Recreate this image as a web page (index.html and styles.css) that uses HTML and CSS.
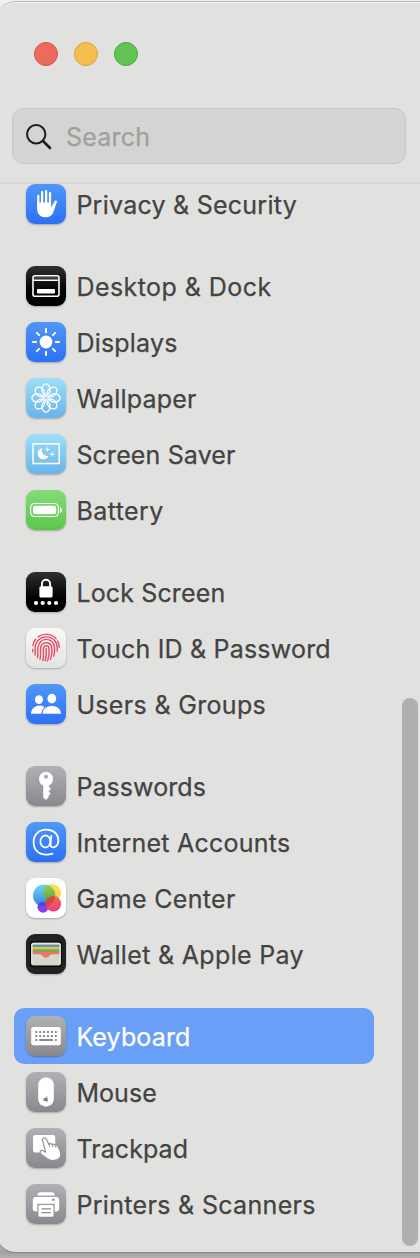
FILE: index.html
```html
<!DOCTYPE html>
<html lang="en">
<head>
<meta charset="utf-8">
<title>System Settings</title>
<link rel="stylesheet" href="styles.css">
</head>
<body>
<div class="window">
  <header class="header">
    <div class="lights"><span class="light red"></span><span class="light yellow"></span><span class="light green"></span></div>
    <div class="search">
      <svg class="glass" viewBox="0 0 26 26"><circle cx="10.2" cy="10.2" r="9.2"/><path d="M17 17l7 7" class="handle"/></svg>
      <span>Search</span>
    </div>
  </header>
  <nav class="list">
    <section class="group">
      <div class="row"><svg class="icon blue" viewBox="0 0 40 40"><g fill="none" stroke="#fff" stroke-width="2.3" stroke-linecap="round"><path d="M12.3 12v13M16.1 8.2V22M20.1 7.2V22M24 9.2V22"/></g><path fill="#fff" d="M11.2 18.5h13.9v5.2l3.4-6.4c.8-1.4 2.9-.8 2.4.8l-3.8 10.7c-1.1 3-3.7 4.4-7.1 4.4-5.8 0-8.8-3.2-8.8-8.3z"/></svg><span class="label privacy">Privacy &amp; Security</span></div>
    </section>
    <section class="group">
      <div class="row"><svg class="icon black" viewBox="0 0 40 40"><g fill="none" stroke="#fff"><rect x="7" y="9.8" width="26" height="20.4" rx="2" stroke-width="1.6"/><path d="M7 14.2h26" stroke-width="1.4"/><path d="M8 12h24" stroke-width=".8" opacity=".4"/></g><rect x="11" y="23" width="18" height="4.4" rx=".8" fill="#fff"/></svg><span class="label desktop">Desktop &amp; Dock</span></div>
      <div class="row"><svg class="icon blue" viewBox="0 0 40 40"><circle cx="20" cy="20" r="6.4" fill="#fff"/><path d="M20 7v3.2M20 29.8V33M7 20h3.2M29.8 20H33M10.9 10.9l2.2 2.2M26.9 26.9l2.2 2.2M10.9 29.1l2.2-2.2M26.9 13.1l2.2-2.2" stroke="#fff" stroke-width="2" stroke-linecap="round"/></svg><span class="label displays">Displays</span></div>
      <div class="row"><svg class="icon cyan" viewBox="0 0 40 40"><g fill="none" stroke="#fff" stroke-width="1.3"><g id="petals"><ellipse id="petal" cx="20" cy="11.5" rx="4.1" ry="5.6"/><use href="#petal" transform="rotate(90 20 20)"/><use href="#petal" transform="rotate(180 20 20)"/><use href="#petal" transform="rotate(270 20 20)"/></g><use href="#petals" transform="rotate(45 20 20)"/><circle cx="20" cy="20" r="1.6" stroke-width=".9"/></g></svg><span class="label wallpaper">Wallpaper</span></div>
      <div class="row"><svg class="icon cyan" viewBox="0 0 40 40"><rect x="7" y="9.8" width="26.2" height="19.7" fill="none" stroke="#fff" stroke-width="1.5"/><path fill="#fff" d="M16.2 14.1a5.7 5.7 0 1 0 6.6 7.6 5.6 5.6 0 0 1-6.6-7.6zM21.5 12.8l.7 2 2 .7-2 .7-.7 2-.7-2-2-.7 2-.7zM26.2 17.3l.7 2.3 2.3.7-2.3.7-.7 2.3-.7-2.3-2.3-.7 2.3-.7z"/></svg><span class="label saver">Screen Saver</span></div>
      <div class="row"><svg class="icon lime" viewBox="0 0 40 40"><rect x="4.6" y="13.5" width="27.9" height="13" rx="4.2" fill="none" stroke="#fff" stroke-width="1.2"/><rect x="7" y="15.8" width="23.2" height="8.5" rx="2.3" fill="#fff"/><path fill="#fff" d="M34 17.1c2.5 1 2.5 4.8 0 5.8z"/></svg><span class="label battery">Battery</span></div>
    </section>
    <section class="group">
      <div class="row"><svg class="icon black" viewBox="0 0 40 40"><path d="M15.9 15v-3.2a4.1 4.1 0 0 1 8.2 0V15" fill="none" stroke="#fff" stroke-width="1.9"/><rect x="13.4" y="14.2" width="13.2" height="11.3" rx="1.6" fill="#fff"/><g fill="#fff"><circle cx="10" cy="31" r="2.1"/><circle cx="16.7" cy="31" r="2.1"/><circle cx="23.3" cy="31" r="2.1"/><circle cx="30" cy="31" r="2.1"/></g></svg><span class="label lock">Lock Screen</span></div>
      <div class="row"><svg class="icon pale" viewBox="0 0 40 40"><g fill="none" stroke="#e54c66" stroke-width="1.4" stroke-linecap="round"><path d="M12 8.8C17.6 5 25.8 5.6 30.2 10.8M31.7 13.2c1 1.9 1.5 3.8 1.6 6M9.6 11.2c-1.8 2.3-2.5 4.3-2.7 6.6M6.8 21.4c0 1-.1 1.4 0 2.4M9 26.7c.7-2.7 0-4.9.1-7C9.6 13 14.5 8.9 20.2 8.9c6.6 0 11 4.6 11 11.2v3.2M11.4 29.5c.9-3.2.2-6.4.4-9 .7-12.1 15.6-11.8 16.7-1.2.3 3.2.1 5.9-.7 8.7M14 31.4c1.1-3.7.3-7.6.6-10.8.6-7.8 10.4-7.5 11.3-.5.5 4.4-.2 8.3-1.5 11.4M16.8 32.5c1.3-4.5.3-8.5.6-11.7.4-4.1 5.4-3.8 5.7-.2.4 4.9-.2 8.6-1.6 12.4M20.2 20.5c.4 4.7-.1 8.4-1 12"/></g></svg><span class="label touch">Touch ID &amp; Password</span></div>
      <div class="row"><svg class="icon blue" viewBox="0 0 40 40"><g fill="#fff"><ellipse cx="13" cy="15.7" rx="4" ry="4.4"/><path d="M5 29.8c0-8 10-10.5 13.7-6.4-2 1.6-3.2 3.6-3.4 6.4z"/><ellipse cx="25.8" cy="14.6" rx="4.4" ry="4.9"/><path d="M16.6 29.8c0-10.5 18.4-10.5 18.4 0z"/></g></svg><span class="label users">Users &amp; Groups</span></div>
    </section>
    <section class="group">
      <div class="row"><svg class="icon gray" viewBox="0 0 40 40"><path fill="#fff" fill-rule="evenodd" d="M17.2 31.5V19.4A7.1 7.1 0 1 1 22.8 19.4v1.2l2.1 2.1-2.3 2.6 2 2.3-2 2.1v1.5L20 34zM20 8.8a2 2 0 1 0 0 4 2 2 0 0 0 0-4z"/></svg><span class="label passwords">Passwords</span></div>
      <div class="row"><svg class="icon blue" viewBox="0 0 40 40"><g fill="none" stroke="#fff" stroke-width="1.8" stroke-linecap="round"><ellipse cx="19.4" cy="19.5" rx="5" ry="6"/><path d="M25.2 14l-.7 8.7c-.2 4.5 7.8 3.4 7.8-4.1 0-7-5-11-12-11C12.7 7.6 7.6 12.8 7.6 20c0 8.2 5.1 12.7 13 12.7 2 0 3.9-.3 5.8-1"/></g></svg><span class="label internet">Internet Accounts</span></div>
      <div class="row"><svg class="icon white" viewBox="0 0 40 40"><defs><linearGradient id="gc-blue" x2="0" y2="1"><stop stop-color="#69dbf3"/><stop offset="1" stop-color="#347bea"/></linearGradient><linearGradient id="gc-yellow" x2="0" y2="1"><stop stop-color="#fce354"/><stop offset="1" stop-color="#f4ca3b"/></linearGradient><linearGradient id="gc-green" x2="0" y2="1"><stop stop-color="#a2cf45"/><stop offset="1" stop-color="#4fa553"/></linearGradient><linearGradient id="gc-red" x2="0" y2="1"><stop stop-color="#ef6557"/><stop offset="1" stop-color="#ed3f7b"/></linearGradient><clipPath id="gc-clip"><circle cx="18.1" cy="17.6" r="11"/></clipPath></defs><circle cx="17" cy="29.2" r="5.5" fill="#8f38ec"/><circle cx="26" cy="14.9" r="9" fill="url(#gc-yellow)"/><circle cx="18.1" cy="17.6" r="11.1" fill="url(#gc-blue)"/><g clip-path="url(#gc-clip)"><circle cx="26" cy="14.9" r="9" fill="url(#gc-green)"/><circle cx="17" cy="29.2" r="5.5" fill="#4c48de"/></g><circle cx="27.3" cy="25.8" r="7.8" fill="url(#gc-red)"/><g clip-path="url(#gc-clip)"><circle cx="27.3" cy="25.8" r="7.8" fill="#c6433c" opacity=".75"/></g></svg><span class="label game">Game Center</span></div>
      <div class="row"><svg class="icon wallet-icon" viewBox="0 0 40 40"><rect x="4.2" y="7.4" width="31.6" height="25.4" rx="3" fill="#000"/><rect x="5.2" y="8.8" width="29.6" height="22.8" rx="2" fill="#d8d7cc"/><path fill="#4c91c5" d="M6.5 10.7h27v3h-27z"/><path fill="#edbd47" d="M6.5 12.8h27v3.3h-27z"/><path fill="#6bb058" d="M6.5 15.2h27v3.3h-27z"/><path fill="#ea7666" d="M6.5 17.7h27v2.5h-5.6c-2.8 0-3.8.5-4.5 1.7-1.5 2.3-5.3 2.3-6.8 0-.7-1.2-1.7-1.7-4.5-1.7H6.5z"/><path fill="none" stroke="#eeeee5" stroke-width="1" d="M5.8 30V11q0-1.7 1.7-1.7h25q1.7 0 1.7 1.7v19"/></svg><span class="label wallet">Wallet &amp; Apple Pay</span></div>
    </section>
    <section class="group">
      <div class="row selected"><svg class="icon gray" viewBox="0 0 40 40"><rect x="5.2" y="11" width="29.6" height="18.2" rx="2.5" fill="#fff"/><path stroke="#8c8b90" stroke-width="2" stroke-dasharray="2 1.9" d="M9.3 16h21.6M9.3 20h21.6"/><path stroke="#8c8b90" stroke-width="2" d="M9.3 24h2M13.2 24h13.7M28.8 24h2"/></svg><span class="label keyboard">Keyboard</span></div>
      <div class="row"><svg class="icon gray" viewBox="0 0 40 40"><rect x="12.2" y="5.6" width="15.6" height="28.8" rx="7.2" fill="#fff"/><path fill="#7d7c81" d="M19.8 25.6c.1-1 .7-1.5 1.4-1.6 0 .8-.5 1.5-1.4 1.6zm-.1.3c.5 0 1.5-.5 2.3.3-1 .7-.6 1.8.2 2.2-.8 1.6-1.4 1-2.5.9-2.7.5-3.4-4 0-3.4z"/></svg><span class="label mouse">Mouse</span></div>
      <div class="row"><svg class="icon gray" viewBox="0 0 40 40"><rect x="7.1" y="7" width="22.1" height="17.6" rx="2.1" fill="#fff"/><path fill="#fff" stroke="#929196" stroke-width="1.2" stroke-linejoin="round" d="M16.6 12.7c-.9-2.7 2.8-4 3.9-1.4l2.4 5.2c.7-1.4 2.9-1 3.2.4.9-1.2 2.8-.7 3.2.7.8-.8 2.4-.2 2.8 1l2.2 5c1.6 3.9-.1 6.9-3.6 8.2-4.8 1.8-8.1.4-11-2l-4.8-3.9c-2-1.8-.1-4.4 2.2-3.1l2.5 1.4z"/><path d="M22.9 16.5l.8 2.1M26.1 16.9l.8 2.1M29.3 17.7l.7 1.8" stroke="#929196" stroke-width="1" stroke-linecap="round"/></svg><span class="label trackpad">Trackpad</span></div>
      <div class="row"><svg class="icon gray" viewBox="0 0 40 40"><g fill="#fff"><path d="M11.4 11.4c.2-2 1.2-3.2 3-3.2h11.3c1.8 0 2.8 1.2 3 3.2z"/><path d="M10.1 12.9h19.8c2.1 0 3.3 1.2 3.3 3.3v8c0 2.1-1 3.2-3.3 3.2h-1.2v-7.6H11.3v7.6h-1.2c-2.3 0-3.3-1.1-3.3-3.2v-8c0-2.1 1.2-3.3 3.3-3.3z"/><rect x="12.5" y="21" width="15" height="11.8" rx="1.6"/></g><circle cx="27.3" cy="15.8" r="1.2" fill="#8c8b90"/><path d="M15.8 24.8h8.6M15.8 28.6h8.6" stroke="#8c8b90" stroke-width="1.2" stroke-linecap="round"/></svg><span class="label printers">Printers &amp; Scanners</span></div>
    </section>
  </nav>
  <div class="thumb"></div>
</div>
</body>
</html>
```
FILE: styles.css
```css
* { box-sizing: border-box; }
html, body { margin: 0; height: 1258px; overflow: hidden; }
body {
  padding-top: 1px;
  background: linear-gradient(#f0f0ef 0, #e8e8e6 1225px, #a0a09f 1252px, #b1b1b0 1258px);
  font-family: Inter, Roboto, sans-serif;
  color: #434342;
}
.window {
  position: relative;
  width: 444px;
  height: 1251px;
  margin-left: -4px;
  padding-left: 4px;
  overflow: hidden;
  background: #e1e1df;
  border-radius: 20px;
  box-shadow: inset 0 1px #b9b9b7, inset 0 2px #f2f2f1, 0 1px #858584;
}
.header {
  height: 183px;
  width: 420px;
  padding: 41px 14px 0 12px;
  border-bottom: 2px solid #d7d7d5;
}
.lights { display: flex; gap: 16px; padding-left: 22px; }
.light { width: 24px; height: 24px; border-radius: 50%; border: 1px solid; }
.red { background: #ed6a5e; border-color: #d45449; }
.yellow { background: #f5bf4f; border-color: #daa23c; }
.green { background: #61c454; border-color: #4ba83d; }
.search {
  display: flex;
  align-items: center;
  gap: 14px;
  height: 56px;
  margin-top: 42px;
  padding: 2px 0 0 13px;
  border: 1px solid #c8c8c6;
  border-radius: 11px;
  background: #d4d4d2;
  color: #a0a09e;
  font-size: 25px;
  letter-spacing: .2px;
  -webkit-text-stroke: .25px;
}
.glass { width: 26px; height: 26px; fill: none; stroke: #1d1d1d; stroke-width: 2; }
.handle { stroke-width: 2.7; stroke-linecap: round; }
.list {
  display: flex;
  flex-direction: column;
  gap: 26px;
  width: 374px;
  margin-top: -8px;
  padding-left: 14px;
}
.row {
  display: flex;
  align-items: center;
  gap: 10px;
  height: 56px;
  padding-left: 12px;
  border-radius: 10px;
}
.selected { background: #6a9ff8; color: #fff; }
.icon {
  flex: none;
  width: 40px;
  height: 40px;
  border-radius: 9px;
  box-shadow: 0 1px 2px #0004;
}
.blue { background: linear-gradient(#5097f8, #2d70f5); }
.black { background: linear-gradient(#303030, #000 65%); }
.cyan { background: linear-gradient(#9cdff8, #6ab3e8); }
.lime { background: linear-gradient(#83dc78, #5bc64e); }
.pale { background: linear-gradient(#f9f9f9, #e3e3e3); }
.gray { background: linear-gradient(#b1b0b5, #89888d); }
.white { background: #fff; }
.wallet-icon { background: #222; }
.label {
  padding: 2px 0 0 .4px;
  font-size: 25px;
  line-height: 32px;
  white-space: nowrap;
  -webkit-text-stroke: .25px;
}
.passwords, .mouse, .trackpad { letter-spacing: .08px; }
.keyboard, .lock, .saver { letter-spacing: .14px; }
.displays, .wallpaper, .touch { letter-spacing: .2px; }
.privacy, .internet { letter-spacing: .25px; }
.users, .game, .wallet, .printers { letter-spacing: .33px; }
.desktop, .battery { letter-spacing: .45px; }
.thumb {
  position: absolute;
  left: 406px;
  top: 697px;
  width: 16px;
  height: 548px;
  border-radius: 8px;
  background: #afafad;
}
```
